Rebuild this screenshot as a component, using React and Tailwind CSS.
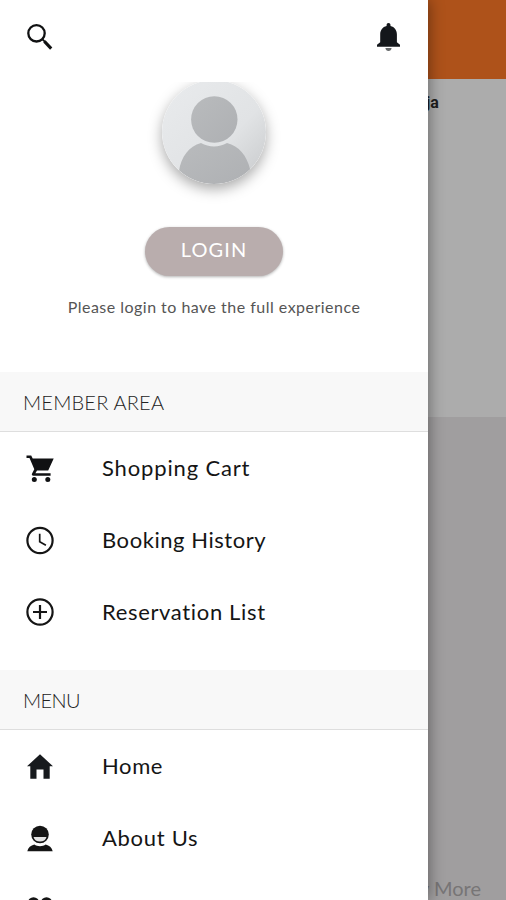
import React from 'react';

const SearchIcon = () => (
  <svg viewBox="0 0 32 32" className="w-8 h-8" fill="none" stroke="#101112">
    <circle cx="12.5" cy="13.3" r="8.2" strokeWidth="2.3" />
    <path d="M20.400 21.400l6.800 7.200" strokeWidth="3.1" />
    <path d="M18.300 19.200l3 3" strokeWidth="1.900" />
  </svg>
);

const BellIcon = () => (
  <svg viewBox="0 0 32 32" className="w-8 h-8" fill="#14171b">
    <path d="M16.500 2.900c1.200 0 2 .8 2 2v1.200c4 .9 6.400 4.200 6.400 8.400v7.800l3.100 2.500v1.900H5v-1.900l3.200-2.500v-7.800c0-4.200 2.400-7.500 6.400-8.400V4.900c0-1.200.7-2 1.900-2z" />
    <path d="M13.400 28h6.200c-.3 2-1.300 3-3.100 3s-2.800-1-3.100-3z" fill="#66696b" />
  </svg>
);

const CartIcon = () => (
  <svg viewBox="0 0 32 32" className="w-8 h-8" fill="#101113">
    <path d="M2.500 3.500h4.700l1.500 2.900h21l-5.500 12.200H13l-1.600 2.700h15.200v2.400H9.400c-1.400 0-2-1-1.300-2.200l2.200-4.300L5.500 6H2.500z" />
    <circle cx="10.300" cy="27.500" r="2.500" />
    <circle cx="23.800" cy="27.500" r="2.500" />
  </svg>
);

const ClockIcon = () => (
  <svg viewBox="0 0 32 32" className="w-8 h-8" fill="none" stroke="#151515">
    <circle cx="16" cy="16.500" r="12.600" strokeWidth="2.200" />
    <path d="M15.700 9.800v8l6.200 3.500" strokeWidth="1.700" />
  </svg>
);

const PlusIcon = () => (
  <svg viewBox="0 0 32 32" className="w-8 h-8" fill="none" stroke="#151515">
    <circle cx="16" cy="16" r="12.600" strokeWidth="2.200" />
    <path d="M16 9v14M9 16h14" strokeWidth="2.200" />
  </svg>
);

const HomeIcon = () => (
  <svg viewBox="0 0 32 32" className="w-8 h-8" fill="#171a1d">
    <path d="M16 4.200L29 16.300h-3.300v12.500H19.500v-9.200h-7v9.200H6.300V16.300H3z" />
  </svg>
);

const PersonIcon = () => (
  <svg viewBox="0 0 32 32" className="w-8 h-8">
    <path d="M3.300 29.200c.8-3.600 3.500-5.900 7-6.700 3 2.200 8.400 2.200 11.400 0 3.500.8 6.200 3.100 7 6.700z" fill="#151515" />
    <circle cx="16" cy="12.500" r="8.800" fill="#151515" />
    <path d="M9.500 15h13c-.7 2.900-3.200 4.600-6.500 4.600S10.200 17.900 9.500 15z" fill="#e4e4e4" />
  </svg>
);

const GroupIcon = () => (
  <svg viewBox="0 0 32 32" className="w-8 h-8" fill="#151515">
    <circle cx="9.500" cy="8.800" r="5.600" />
    <circle cx="22.500" cy="8.800" r="5.600" />
    <path d="M2 27c0-12 13-12 14-2 1-10 14-10 14 2z" />
  </svg>
);

const Avatar = () => (
  <svg viewBox="0 0 104 104" className="w-[104px] h-[104px] -mt-0.5 shrink-0 rounded-full shadow-[0_5px_14px_rgba(0,0,0,0.34)]">
    <defs>
      <linearGradient id="avatarBg" x1="0" y1="0" x2="1" y2="1">
        <stop offset="0" stopColor="#e9ebed" />
        <stop offset="0.6" stopColor="#e1e3e5" />
        <stop offset="1" stopColor="#c6c8ca" />
      </linearGradient>
      <linearGradient id="avatarFg" x1="0" y1="0" x2="1" y2="1">
        <stop offset="0" stopColor="#b9bbbd" />
        <stop offset="1" stopColor="#aeb0b3" />
      </linearGradient>
      <clipPath id="avatarClip">
        <circle cx="52" cy="52" r="52" />
      </clipPath>
    </defs>
    <g clipPath="url(#avatarClip)">
      <rect width="104" height="104" fill="url(#avatarBg)" />
      <circle cx="52.300" cy="39.500" r="23.200" fill="url(#avatarFg)" />
      <path d="M17 91c2-14 10-25 22-28 8 4.500 18 4.500 26 0 12 3 20 13 23 26v17H17z" fill="url(#avatarFg)" />
    </g>
  </svg>
);

const memberItems = [
  { label: 'Shopping Cart', Icon: CartIcon, spacing: 'tracking-[0.850px]' },
  { label: 'Booking History', Icon: ClockIcon, spacing: 'tracking-[0.550px]' },
  { label: 'Reservation List', Icon: PlusIcon, spacing: 'tracking-[0.650px]' },
];

const menuItems = [
  { label: 'Home', Icon: HomeIcon, spacing: 'tracking-[0.6px]' },
  { label: 'About Us', Icon: PersonIcon, spacing: 'tracking-[0.7px]' },
  { label: '', Icon: GroupIcon, spacing: '' },
];

const Section = ({ title, items, spacing }) => (
  <section>
    <h2 className={`h-[60px] flex items-center pl-[23px] bg-[#f8f8f8] border-b border-[#dedede] text-xl font-light text-[#222] ${spacing}`}>
      {title}
    </h2>
    <ul>
      {items.map(({ label, Icon, spacing }, idx) => (
        <li key={idx} className="h-[72px] flex items-center pl-6">
          <Icon />
          <span className={`ml-[46px] pb-0.5 text-[22px] text-[#151515] ${spacing}`}>{label}</span>
        </li>
      ))}
    </ul>
  </section>
);

const App = () => {
  return (
    <div className="relative h-[900px] w-[506px] overflow-hidden font-['Lato',sans-serif]">
      {/* dimmed page behind the drawer */}
      <div className="h-full flex flex-col">
        <div className="h-[79px] bg-[#ae521a]" />
        <div className="h-[338px] bg-[#acacac] pl-[426px] pt-3">
          <div className="font-['Roboto',sans-serif] font-bold text-base leading-6 text-[#1d1d1d]">ja</div>
        </div>
        <div className="flex-1 bg-[#a09e9f] flex items-end justify-end pr-[25px]">
          <span className="text-xl leading-6 text-[#777576]">y More</span>
        </div>
      </div>

      <aside className="absolute left-0 top-0 h-full w-[428px] bg-white shadow-[1px_0_14px_rgba(0,0,0,0.4)]">
        <div className="h-[82px] flex justify-between pl-6 pr-6 pt-5">
          <SearchIcon />
          <BellIcon />
        </div>
        <div className="h-[290px] flex flex-col items-center overflow-hidden">
          <Avatar />
          <button className="mt-[43px] w-[138px] h-[49px] shrink-0 rounded-full bg-[#b9adad] text-xl tracking-[1.100px] text-white pb-1.5 shadow-[0_1px_3px_rgba(0,0,0,0.3)]">
            LOGIN
          </button>
          <p className="mt-[19px] text-base leading-6 text-[#555] tracking-[0.480px]">Please login to have the full experience</p>
        </div>
        <Section title="MEMBER AREA" items={memberItems} spacing="tracking-[0.2px]" />
        <div className="h-[22px]" />
        <Section title="MENU" items={menuItems} spacing="tracking-[-0.6px]" />
      </aside>
    </div>
  );
};

export default App;
